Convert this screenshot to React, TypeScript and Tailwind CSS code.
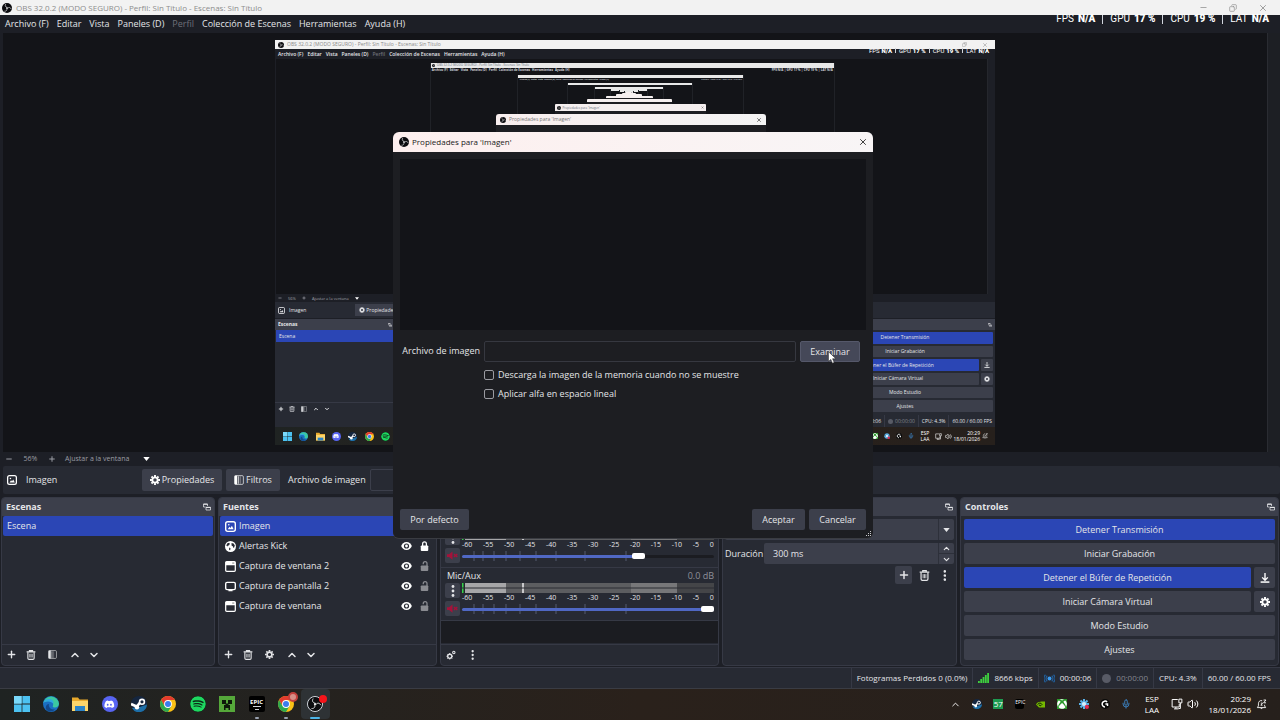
import React from 'react';
import clsx from 'clsx';
import { ChevronDown, ChevronUp, Copy, Mic, Minus, Plus, Volume2, X } from 'lucide-react';
import { FaDiscord, FaSpotify, FaXbox } from 'react-icons/fa';

interface IconProps {
  className?: string;
}

/* ---------- Icons ---------- */

const ObsLogo: React.FC<IconProps> = ({ className }) => (
  <svg viewBox="0 0 24 24" className={className} aria-hidden="true">
    <circle cx="12" cy="12" r="12" fill="#0c0c0f" />
    <g fill="none" stroke="#e8e8ea" strokeWidth="1.6" strokeLinecap="round">
      <path d="M12 10.5c-4-.5-5.500-4-3.500-7.200" />
      <path d="M13.500 12.700c2.500-3.200 6.300-2.800 8 .6" />
      <path d="M11.500 13.500c1.500 3.700-1 6.500-4.800 6.300" />
    </g>
    <circle cx="12" cy="12.200" r="2" fill="#e8e8ea" />
  </svg>
);

const ImageIcon: React.FC<IconProps> = ({ className }) => (
  <svg viewBox="0 0 16 16" className={className} aria-hidden="true">
    <rect x="1" y="1" width="14" height="14" rx="3" fill="none" stroke="currentColor" strokeWidth="2" />
    <path d="M4 12l2.500-3.500L8 10l2-3 2.500 5z" fill="currentColor" />
    <circle cx="5.500" cy="5.500" r="1.200" fill="currentColor" />
  </svg>
);

const GearIcon: React.FC<IconProps> = ({ className }) => (
  <svg viewBox="0 0 16 16" className={className} aria-hidden="true">
    <circle cx="8" cy="8" r="4.300" fill="none" stroke="currentColor" strokeWidth="3" />
    <path
      d="M8 0v3M8 13v3M0 8h3M13 8h3M2.400 2.400l2 2M11.600 11.600l2 2M2.400 13.600l2-2M11.600 4.400l2-2"
      stroke="currentColor"
      strokeWidth="3"
    />
  </svg>
);

const GearsIcon: React.FC<IconProps> = ({ className }) => (
  <svg viewBox="0 0 16 16" className={className} fill="none" stroke="currentColor" aria-hidden="true">
    <circle cx="6" cy="10" r="3.300" strokeWidth="2.200" />
    <path d="M6 4.800v2M6 13.200v2M.8 10h2M9.200 10h2M2.300 6.300l1.500 1.500M9.700 13.700l-1.500-1.500M2.300 13.700l1.500-1.500" strokeWidth="1.600" />
    <circle cx="12.500" cy="4" r="1.900" strokeWidth="1.700" />
  </svg>
);

const TrashIcon: React.FC<IconProps> = ({ className }) => (
  <svg viewBox="0 0 16 16" className={className} fill="none" stroke="currentColor" aria-hidden="true">
    <path d="M1 3h14M5.500 2.500V1h5v1.500" strokeWidth="1.800" />
    <path d="M3 3.500v9.500a2 2 0 0 0 2 2h6a2 2 0 0 0 2-2V3.500" strokeWidth="1.800" />
    <path d="M6 6v6M8 6v6M10 6v6" strokeWidth="1.200" />
  </svg>
);

const FilterIcon: React.FC<IconProps> = ({ className }) => (
  <svg viewBox="0 0 16 16" className={className} aria-hidden="true">
    <rect x="1" y="1" width="14" height="14" rx="2" fill="none" stroke="currentColor" strokeWidth="1.500" opacity=".7" />
    <path d="M1 1h4v14H1z" fill="currentColor" />
    <path d="M6 2h2v12H6z" fill="currentColor" opacity=".65" />
    <path d="M9 2h2v12H9z" fill="currentColor" opacity=".3" />
  </svg>
);

const PopOutIcon: React.FC<IconProps> = ({ className }) => (
  <svg viewBox="0 0 16 16" className={className} fill="none" stroke="currentColor" aria-hidden="true">
    <path d="M9 6V2H1v6h4" strokeWidth="1.500" />
    <path d="M1 2.500h8" strokeWidth="2.400" />
    <path d="M6 8.500h9V14H6z" strokeWidth="1.500" />
    <path d="M6 9h9" strokeWidth="2.400" />
  </svg>
);

const DotsIcon: React.FC<IconProps> = ({ className }) => (
  <svg viewBox="0 0 4 12" className={className} fill="currentColor" aria-hidden="true">
    <circle cx="2" cy="1.500" r="1.400" />
    <circle cx="2" cy="6" r="1.400" />
    <circle cx="2" cy="10.500" r="1.400" />
  </svg>
);

const CaretIcon: React.FC<IconProps> = ({ className }) => (
  <svg viewBox="0 0 8 5" className={className} fill="currentColor" aria-hidden="true">
    <path d="M0 0h8L4 5z" />
  </svg>
);

const WindowIcon: React.FC<IconProps> = ({ className }) => (
  <svg viewBox="0 0 16 16" className={className} aria-hidden="true">
    <rect x="1" y="1" width="14" height="14" rx="1.500" fill="none" stroke="currentColor" strokeWidth="1.800" />
    <path d="M1 1h14v5H1z" fill="currentColor" />
    <path d="M10.500 3h3" stroke="#444" strokeWidth="1" />
  </svg>
);

const DisplayIcon: React.FC<IconProps> = ({ className }) => (
  <svg viewBox="0 0 16 16" className={className} aria-hidden="true">
    <rect x="1" y="2" width="14" height="10.500" rx="2" fill="none" stroke="currentColor" strokeWidth="2" />
    <path d="M5 12h6v3H5z" fill="currentColor" />
  </svg>
);

const GlobeIcon: React.FC<IconProps> = ({ className }) => (
  <svg viewBox="0 0 16 16" className={className} aria-hidden="true">
    <circle cx="8" cy="8" r="8" fill="currentColor" />
    <path d="M3 3.500l3-1 1 1.500-1 2-2 1L3.500 8 2 7zM9.500 3l3 .5 1.800 3-1 3-1 .500-1-2.500-1.800-1zM6 9.500l2 1-.5 3L6 13z" fill="#272a33" />
  </svg>
);

const EyeIcon: React.FC<IconProps> = ({ className }) => (
  <svg viewBox="0 0 16 12" className={className} aria-hidden="true">
    <path d="M8 0C4 0 1.200 2.800 0 6c1.200 3.200 4 6 8 6s6.800-2.800 8-6c-1.200-3.200-4-6-8-6z" fill="currentColor" />
    <circle cx="8" cy="6" r="3.900" fill="#272a33" />
    <circle cx="8" cy="6" r="2.100" fill="currentColor" />
  </svg>
);

const LockIcon: React.FC<IconProps & { open?: boolean }> = ({ className, open }) => (
  <svg viewBox="0 0 14 16" className={className} aria-hidden="true">
    <rect x="1" y="7" width="12" height="9" rx="1.500" fill="currentColor" />
    <path
      d={open ? 'M5 5V4a3 3 0 0 1 6 0v4' : 'M4 8V4.500a3 3 0 0 1 6 0V8'}
      fill="none"
      stroke="currentColor"
      strokeWidth="2"
    />
  </svg>
);

const MutedIcon: React.FC<IconProps> = ({ className }) => (
  <svg viewBox="0 0 16 12" className={className} aria-hidden="true">
    <path d="M0 4h3l5-4v12L3 8H0z" fill="#a5123a" />
    <path d="M10 4l5 4M15 4l-5 4" stroke="#a5123a" strokeWidth="2" />
  </svg>
);

const SaveIcon: React.FC<IconProps> = ({ className }) => (
  <svg viewBox="0 0 16 16" className={className} fill="none" stroke="currentColor" aria-hidden="true">
    <path d="M8 0v11M3.500 7L8 11.500 12.500 7" strokeWidth="2.200" />
    <path d="M1 14.500h14" strokeWidth="2.400" />
  </svg>
);

const WindowsLogo: React.FC<IconProps> = ({ className }) => (
  <svg viewBox="0 0 16 16" className={className} aria-hidden="true">
    <path d="M0 0h7.600v7.600H0zM8.400 0H16v7.600H8.400zM0 8.400h7.600V16H0zM8.400 8.400H16V16H8.400z" fill="#4cc2f1" />
    <path d="M0 0h7.600v7.600H0z" fill="#7ad9fa" />
  </svg>
);

const EdgeLogo: React.FC<IconProps> = ({ className }) => (
  <svg viewBox="0 0 16 16" className={className} aria-hidden="true">
    <circle cx="8" cy="8" r="8" fill="#1b6fc2" />
    <path d="M.2 7A8 8 0 0 1 16 7.800c0 2.400-2 3.700-4 3.700-1.700 0-2.700-.8-2.200-1.600C11 8 9.500 5 6 5 3.200 5 .8 6 .2 7z" fill="#3cc8a0" />
    <path d="M.2 7C1.200 4 4 2.500 7 3c3 .6 4 3 3.500 5C9 5.500 4 4.500.2 7z" fill="#2fa8e0" />
    <path d="M6 8c-1 3 1.500 6 6 5.500-2 2.500-7 3-9-.5C2 10.500 4 8 6 8z" fill="#12488c" />
  </svg>
);

const FolderLogo: React.FC<IconProps> = ({ className }) => (
  <svg viewBox="0 0 16 16" className={className} aria-hidden="true">
    <path d="M0 1.500h6l1.500 2H16V15H0z" fill="#e8a92c" />
    <path d="M0 5h16v10H0z" fill="#fcd56a" />
    <path d="M3 10h10v5H3z" fill="#2b84c8" />
  </svg>
);

const DiscordLogo: React.FC<IconProps> = ({ className }) => (
  <span className={clsx('flex items-center justify-center rounded-full bg-[#5865f2] text-white', className)}>
    <FaDiscord className="w-2/3 h-2/3" />
  </span>
);

const SteamLogo: React.FC<IconProps> = ({ className }) => (
  <svg viewBox="0 0 16 16" className={className} aria-hidden="true">
    <circle cx="8" cy="8" r="8" fill="#15263f" />
    <path d="M1 12A8 8 0 0 0 16 8.500L9 11z" fill="#1d6fa8" />
    <path d="M0 8l5 2.200a2.300 2.300 0 0 1 1.500-.4L9 6.500" fill="none" stroke="#fff" strokeWidth="2.600" />
    <circle cx="6" cy="11.300" r="2.200" fill="#fff" />
    <circle cx="11" cy="5.800" r="2.400" fill="#15263f" stroke="#fff" strokeWidth="1.600" />
  </svg>
);

const ChromeLogo: React.FC<IconProps> = ({ className }) => (
  <svg viewBox="0 0 16 16" className={className} aria-hidden="true">
    <circle cx="8" cy="8" r="8" fill="#fbc116" />
    <path d="M8 4h6.900A8 8 0 0 0 1.100 4L4.500 9.800z" fill="#e33b2e" />
    <path d="M1.100 4A8 8 0 0 0 8 16l3.500-6L8 8 4.500 10z" fill="#2da94f" />
    <circle cx="8" cy="8" r="3.900" fill="#fff" />
    <circle cx="8" cy="8" r="3" fill="#3b7ded" />
  </svg>
);

const SpotifyLogo: React.FC<IconProps> = ({ className }) => (
  <FaSpotify className={clsx('rounded-full bg-[#0c2b16] text-[#1ed760]', className)} />
);

const CreeperLogo: React.FC<IconProps> = ({ className }) => (
  <svg viewBox="0 0 16 16" className={className} aria-hidden="true">
    <path d="M0 0h16v16H0z" fill="#55a83a" />
    <path d="M3 4h4v4H3zM9 4h4v4H9zM6.500 7.500h3V9H11v5H9.500v-2h-3v2H5V9h1.500z" fill="#0d1a0a" />
  </svg>
);

const EpicLogo: React.FC<IconProps> = ({ className }) => (
  <span className={clsx('flex flex-col items-center justify-center rounded-xs bg-black text-white font-bold', className)}>
    <span className="text-[6px] leading-[7px]">EPIC</span>
    <span className="w-2 h-px bg-gray-300" />
    <span className="w-1 h-px mt-[2px] bg-gray-300" />
  </span>
);

const ChromeBadgeLogo: React.FC<IconProps> = ({ className }) => (
  <span className={clsx('relative', className)}>
    <ChromeLogo className="w-full h-full" />
    <span className="absolute -top-1 -right-1 w-[10px] h-[10px] rounded-full border-2 border-[#c4403c] bg-[#d89088]" />
  </span>
);

const ObsRunningLogo: React.FC<IconProps> = ({ className }) => (
  <span className={clsx('relative', className)}>
    <ObsLogo className="w-full h-full rounded-full border border-gray-300" />
    <span className="absolute -top-px -right-1 w-2 h-2 rounded-full bg-[#f5151b]" />
  </span>
);

/* ---------- Data ---------- */

const MENU = ['Archivo (F)', 'Editar', 'Vista', 'Paneles (D)', 'Perfil', 'Colección de Escenas', 'Herramientas', 'Ayuda (H)'];

const STATS = [
  ['FPS', 'N/A'],
  ['GPU', '17 %'],
  ['CPU', '19 %'],
  ['LAT', 'N/A'],
];

const SOURCES = [
  { name: 'Imagen', icon: ImageIcon, selected: true, locked: false },
  { name: 'Alertas Kick', icon: GlobeIcon, selected: false, locked: true },
  { name: 'Captura de ventana 2', icon: WindowIcon, selected: false, locked: false },
  { name: 'Captura de pantalla 2', icon: DisplayIcon, selected: false, locked: false },
  { name: 'Captura de ventana', icon: WindowIcon, selected: false, locked: false },
];

const DB_LABELS = ['-60', '-55', '-50', '-45', '-40', '-35', '-30', '-25', '-20', '-15', '-10', '-5', '0'];
const FADER_TICKS = [12, 21, 32, 44, 58, 74, 94, 123, 164];

const APPS = [
  { name: 'Inicio', icon: WindowsLogo },
  { name: 'Edge', icon: EdgeLogo },
  { name: 'Explorador', icon: FolderLogo },
  { name: 'Discord', icon: DiscordLogo },
  { name: 'Steam', icon: SteamLogo },
  { name: 'Chrome', icon: ChromeLogo },
  { name: 'Spotify', icon: SpotifyLogo },
  { name: 'Minecraft', icon: CreeperLogo },
  { name: 'Epic Games', icon: EpicLogo, open: true },
  { name: 'Chrome 2', icon: ChromeBadgeLogo, open: true },
  { name: 'OBS', icon: ObsRunningLogo, active: true },
];

/* ---------- Shared pieces ---------- */

const Stats: React.FC<{ mini?: boolean }> = ({ mini }) => (
  <div
    className={clsx(
      'absolute flex items-center font-[Roboto] text-white',
      mini ? 'right-[6px] top-[7px] text-[6px] leading-[7px]' : 'right-[11px] top-[13px] text-[10px] leading-[12px]'
    )}
  >
    {STATS.map(([label, value], i) => (
      <React.Fragment key={label}>
        {i > 0 && <span className={clsx('w-px bg-gray-300', mini ? 'h-[5px] mx-[3px]' : 'h-[9px] mx-[7px]')} />}
        <span className={mini ? 'mr-[2px]' : 'mr-[4px]'}>{label}</span>
        <span className="font-black">{value}</span>
      </React.Fragment>
    ))}
  </div>
);

const StatusBar: React.FC<{ mini?: boolean }> = ({ mini }) => {
  const cell = clsx('flex items-center h-full border-l border-[#363945]', mini ? 'px-[3px] gap-[2px]' : 'px-[5px] gap-[5px]');
  return (
    <div
      className={clsx(
        'flex items-center justify-end shrink-0 overflow-hidden whitespace-nowrap bg-[#272a33] text-[#e4e5e8]',
        mini ? 'h-[12px] text-[5px]' : 'h-[21px] border-t border-[#363945] text-[8px]'
      )}
    >
      {!mini && (
        <>
          <span className={cell}>Fotogramas Perdidos 0 (0.0%)</span>
          <span className={cell}>
            <svg viewBox="0 0 11 10" className="w-[11px] h-[10px]" fill="#3fd13f" aria-hidden="true">
              <path d="M0 8h1.800v2H0zM2.300 6h1.800v4H2.300zM4.600 4h1.800v6H4.600zM6.900 2h1.800v8H6.900zM9.200 0H11v10H9.200z" />
            </svg>
            8666 kbps
          </span>
        </>
      )}
      <span className={cell}>
        <svg viewBox="0 0 12 10" className={mini ? 'w-[5px] h-[5px]' : 'w-[11px] h-[9px]'} fill="none" stroke="#22619f" strokeWidth="1.300" aria-hidden="true">
          <circle cx="6" cy="5" r="2.200" fill="#3b9bef" stroke="none" />
          <path d="M3.500 2a4 4 0 0 0 0 6M8.500 2a4 4 0 0 1 0 6M1.500 .8a6 6 0 0 0 0 8.400M10.500 .8a6 6 0 0 1 0 8.400" />
        </svg>
        00:00:06
      </span>
      <span className={clsx(cell, 'text-[#858791]')}>
        <span className={clsx('rounded-full bg-[#585b66]', mini ? 'w-[5px] h-[5px]' : 'w-[9px] h-[9px]')} />
        00:00:00
      </span>
      <span className={cell}>CPU: 4.3%</span>
      <span className={cell}>60.00 / 60.00 FPS</span>
      {!mini && <span className="w-1" />}
    </div>
  );
};

const TrayIcons: React.FC<{ mini?: boolean }> = ({ mini }) => {
  const size = mini ? 'w-[6px] h-[6px]' : 'w-[10px] h-[10px]';
  return (
    <>
      <FaXbox className={clsx('bg-[#2c9a2c] text-white', size)} />
      <svg viewBox="0 0 12 12" className={size} aria-hidden="true">
        <path d="M6 0v12M0 6h12M1.800 1.800l8.400 8.400M10.200 1.800l-8.400 8.400" stroke="#5ab2e8" strokeWidth="2.500" />
        <circle cx="6" cy="6" r="2.500" fill="#d8eefa" />
        <circle cx="9.500" cy="9.500" r="2.500" fill="#e02b50" />
      </svg>
      <svg viewBox="0 0 12 12" className={size} aria-hidden="true">
        <circle cx="6" cy="6" r="6" fill="#0a0a0a" />
        <path d="M8.500 3.500A3.500 3.500 0 1 0 6 9.500M6.500 6H9v2.500" fill="none" stroke="#fff" strokeWidth="1.800" />
      </svg>
      <Mic className={clsx('text-[#3f8fd8]', size)} />
    </>
  );
};

const MonitorIcon: React.FC<IconProps> = ({ className }) => (
  <svg viewBox="0 0 16 16" className={className} fill="none" stroke="#fff" strokeWidth="1.300" aria-hidden="true">
    <path d="M9 2H1.500v10H11V8M4 14.500h6M6.500 12v2.500" />
    <path d="M10.500 1.500h4v5h-4zM12.500 6.500V14H10" />
  </svg>
);

const BellIcon: React.FC<IconProps> = ({ className }) => (
  <svg viewBox="0 0 16 16" className={className} fill="none" stroke="#fff" strokeWidth="1.300" aria-hidden="true">
    <path d="M9 2.500C5.500 1.500 3.500 4 3.500 7v3L2 12.500h12L12.500 10V8.500M6.500 13a1.700 1.700 0 0 0 3 0" />
    <path d="M11 1.500h3.500L11 5.500h3.500M7 6h2.500L7 9h2.500" />
  </svg>
);

const Taskbar: React.FC<{ mini?: boolean }> = ({ mini }) => (
  <div
    className={clsx(
      'flex items-center justify-between shrink-0 bg-linear-to-r from-[#1f2322] via-[#2a211b] to-[#26201c] text-white',
      mini ? 'h-[18px]' : 'h-[32px] pb-px border-t border-[#3a3c44]'
    )}
  >
    <div className={clsx('grid h-full', mini ? 'grid-cols-7 w-[115px] ml-[4px]' : 'grid-cols-11 w-[323px] ml-[7px]')}>
      {APPS.slice(0, mini ? 7 : 11).map(({ name, icon: Icon, open, active }) =>
        mini ? (
          <span key={name} className="flex items-center justify-center">
            <Icon className="w-[9px] h-[9px]" />
          </span>
        ) : (
          <button
            key={name}
            aria-label={name}
            className={clsx('relative flex items-center justify-center rounded-sm', active && 'bg-[#2e3235]')}
          >
            <Icon className="w-4 h-4" />
            {open && <span className="absolute bottom-0 w-1 h-[2px] rounded-full bg-gray-400" />}
            {active && <span className="absolute bottom-0 w-[10px] h-[2px] rounded-full bg-[#4cb4e8]" />}
          </button>
        )
      )}
    </div>

    <div className={clsx('flex items-center h-full', mini ? 'pr-[5px] text-[5px] leading-[6px]' : 'pr-[9px] text-[8px] leading-[11px]')}>
      <div className={clsx('grid items-center justify-items-center', mini ? 'grid-cols-4 w-[48px]' : 'grid-cols-9 w-[192px]')}>
        {!mini && (
          <>
            <ChevronUp className="w-[11px] h-[11px]" />
            <SteamLogo className="w-[10px] h-[10px]" />
            <span className="w-[10px] h-[10px] bg-[#1d9a50] text-[8px] leading-[10px] text-center">57</span>
            <span className="w-[9px] h-[10px] rounded-xs bg-black text-[5px] leading-[6px] text-center">EPIC</span>
            <svg viewBox="0 0 12 12" className="w-[9px] h-[9px]" aria-hidden="true">
              <path d="M0 6c2-4 5-4 12-4v8H4z" fill="#76b900" />
              <path d="M2 6c1.500-2.500 5-2.500 6 0-1.500 2.500-4 2-4 0" fill="none" stroke="#10200a" strokeWidth="1.300" />
            </svg>
          </>
        )}
        <TrayIcons mini={mini} />
      </div>
      <div className={clsx('text-center', mini ? 'w-[16px]' : 'w-[30px]')}>
        ESP
        <br />
        LAA
      </div>
      <span className={clsx('flex justify-center', mini ? 'w-[11px]' : 'w-5')}>
        <MonitorIcon className={mini ? 'w-[7px] h-[7px]' : 'w-[12px] h-[12px]'} />
      </span>
      <span className={clsx('flex justify-center', mini ? 'w-[8px]' : 'w-3')}>
        <Volume2 className={mini ? 'w-[7px] h-[7px]' : 'w-[12px] h-[12px]'} />
      </span>
      <div className={clsx('text-right whitespace-nowrap', mini ? 'w-[28px]' : 'w-[52px]')}>
        20:29
        <br />
        18/01/2026
      </div>
      <span className={clsx('flex justify-center', mini ? 'w-[10px]' : 'w-5')}>
        <BellIcon className={mini ? 'w-[6px] h-[6px]' : 'w-[11px] h-[11px]'} />
      </span>
    </div>
  </div>
);

/* ---------- Captured screen ---------- */

// Every level repeats the desktop at 56.25% of the one around it
const Echo: React.FC<{ depth: number }> = ({ depth }) => (
  <div className="absolute left-[21.5%] top-[5.6%] w-[56.25%] aspect-video bg-[#131418] border-x border-[#202227]">
    <div className="flex items-center h-[2.2%] min-h-[2px] bg-[#e8e8e8]">
      {depth === 1 && <ObsLogo className="w-[3px] h-[3px] ml-px" />}
      {depth === 1 && <span className="ml-[2px] text-[3px] leading-[4px] text-gray-500 whitespace-nowrap">OBS 32.0.2 (MODO SEGURO) - Perfil: Sin Título - Escenas: Sin Título</span>}
    </div>
    {depth < 3 && (
      <div
        className={clsx(
          'flex justify-between px-px font-bold text-gray-300 whitespace-nowrap',
          depth === 1 ? 'text-[3px] leading-[5px]' : 'text-[2px] leading-[3px]'
        )}
      >
        <div className={clsx('flex', depth === 1 ? 'gap-[2px]' : 'gap-px')}>
          {MENU.map((item) => (
            <span key={item}>{item}</span>
          ))}
        </div>
        <span>FPS N/A | GPU 17 % | CPU 19 % | LAT N/A</span>
      </div>
    )}
    {depth < 7 && <Echo depth={depth + 1} />}
    <div className="absolute left-[30.7%] top-[18.3%] w-[37.5%] h-[56%] bg-[#1d1e22]">
      <div className="flex items-center justify-between h-[5%] min-h-[2px] rounded-t-[1px] bg-[#f5efef]">
        {depth === 1 && (
          <>
            <span className="flex items-center gap-[2px] text-[3px] leading-[4px] text-gray-500">
              <ObsLogo className="w-[4px] h-[4px] ml-[2px]" />
              Propiedades para 'Imagen'
            </span>
            <X className="w-[3px] h-[3px] mr-[2px] text-black" />
          </>
        )}
      </div>
    </div>
  </div>
);

const MiniControl: React.FC<{ label: string; primary?: boolean; side?: React.ReactNode }> = ({ label, primary, side }) => (
  <div className="flex gap-[2px]">
    <span className={clsx('flex flex-1 items-center justify-center rounded-[1px]', primary ? 'bg-[#2b46b5]' : 'bg-[#3c3f4b]')}>{label}</span>
    {side && <span className="flex items-center justify-center w-[12px] rounded-[1px] bg-[#3c3f4b]">{side}</span>}
  </div>
);

const CapturedScreen: React.FC = () => (
  <div className="relative flex flex-col h-full aspect-video bg-[#1d1f26] text-[5px] leading-[7px] text-[#e4e5e8] whitespace-nowrap">
    <div className="flex items-center h-[9px] px-[3px] gap-[3px] bg-[#f2f2f2] text-[#8a8a8a]">
      <ObsLogo className="w-[6px] h-[6px]" />
      <span className="flex-1">OBS 32.0.2 (MODO SEGURO) - Perfil: Sin Título - Escenas: Sin Título</span>
      <Copy className="w-[5px] h-[5px] -scale-x-100 mr-[12px]" />
      <X className="w-[6px] h-[6px] mr-[4px]" />
    </div>
    <div className="flex items-center h-[10px] px-[3px] gap-[4px] font-semibold">
      {MENU.map((item) => (
        <span key={item} className={clsx(item === 'Perfil' && 'text-[#6d6f78]')}>
          {item}
        </span>
      ))}
    </div>
    <Stats mini />
    <div className="flex-1 ml-px mr-[7px] border-r border-[#25272d] bg-[#131418]" />
    <div className="flex items-center h-[8px] px-[3px] gap-[6px] text-[4px] text-[#a0a2a9]">
      <Minus className="w-[4px] h-[4px]" strokeWidth={4} />
      <span>56%</span>
      <Plus className="w-[4px] h-[4px]" strokeWidth={4} />
      <span>Ajustar a la ventana</span>
      <CaretIcon className="w-[4px] h-[3px] text-white" />
    </div>
    <div className="flex items-center h-[16px] px-[3px] bg-[#272a33]">
      <ImageIcon className="w-[7px] h-[7px]" />
      <span className="w-[66px] ml-[4px]">Imagen</span>
      <span className="flex items-center justify-center gap-px w-[45px] h-[12px] bg-[#3c3f4b]">
        <GearIcon className="w-[6px] h-[6px]" />
        Propiedades
      </span>
    </div>
    <div className="flex justify-between h-[97px] pt-px">
      <div className="flex flex-col w-[120px] bg-[#272a33]">
        <div className="flex items-center justify-between h-[11px] px-[3px] bg-[#3c3f4b] font-bold">
          Escenas
          <PopOutIcon className="w-[4px] h-[4px]" />
        </div>
        <div className="flex-1 px-px">
          <div className="h-[12px] px-[3px] leading-[12px] bg-[#2b46b5]">Escena</div>
        </div>
        <div className="flex items-center h-[13px] px-[3px] gap-[5px] border-t border-[#363945]">
          <Plus className="w-[6px] h-[6px]" strokeWidth={4} />
          <TrashIcon className="w-[6px] h-[6px]" />
          <FilterIcon className="w-[6px] h-[6px] mx-px" />
          <ChevronUp className="w-[6px] h-[6px]" strokeWidth={4} />
          <ChevronDown className="w-[6px] h-[6px]" strokeWidth={4} />
        </div>
      </div>
      <div className="flex flex-col w-[180px] bg-[#272a33]">
        <div className="flex items-center justify-end h-[11px] px-[3px] bg-[#3c3f4b]">
          <PopOutIcon className="w-[4px] h-[4px]" />
        </div>
        <div className="grid flex-1 grid-rows-6 gap-[2px] px-[2px] pt-[2px] pb-[3px]">
          <MiniControl label="Detener Transmisión" primary />
          <MiniControl label="Iniciar Grabación" />
          <MiniControl label="Detener el Búfer de Repetición" primary side={<SaveIcon className="w-[6px] h-[6px]" />} />
          <MiniControl label="Iniciar Cámara Virtual" side={<GearIcon className="w-[6px] h-[6px]" />} />
          <MiniControl label="Modo Estudio" />
          <MiniControl label="Ajustes" />
        </div>
      </div>
    </div>
    <StatusBar mini />
    <Taskbar mini />
    <Echo depth={1} />
    <div className="absolute left-[30.7%] top-[18.3%] w-[37.5%] h-[56%] bg-[#1d1e22]">
      <div className="flex items-center h-[11px] px-[4px] gap-[3px] rounded-t-[3px] bg-linear-to-r from-[#f8eeee] to-[#f4f4f4] text-[#777]">
        <ObsLogo className="w-[6px] h-[6px]" />
        <span className="flex-1">Propiedades para 'Imagen'</span>
        <X className="w-[6px] h-[6px] text-black" />
      </div>
    </div>
  </div>
);

/* ---------- Docks ---------- */

const Dock: React.FC<{ title?: string; popOut?: boolean; footer?: React.ReactNode; children: React.ReactNode }> = ({
  title,
  popOut = true,
  footer,
  children,
}) => (
  <section className="flex flex-col min-w-0 rounded-sm border border-[#363945] bg-[#272a33] overflow-hidden">
    <header className="flex items-center justify-between h-[18px] pb-px pl-1 pr-[3px] shrink-0 bg-[#3c3f4b]">
      <h2 className="font-bold">{title}</h2>
      {popOut && (
        <button aria-label="Desacoplar">
          <PopOutIcon className="w-[8px] h-[8px]" />
        </button>
      )}
    </header>
    <div className="flex-1 min-h-0">{children}</div>
    {footer && <footer className="flex items-center h-[21px] pb-px shrink-0 border-t border-[#363945]">{footer}</footer>}
  </section>
);

const ToolButton: React.FC<{ label: string; children: React.ReactNode }> = ({ label, children }) => (
  <button aria-label={label} className="flex items-center justify-center w-[19px] h-[18px]">
    {children}
  </button>
);

const Meter: React.FC = () => (
  <svg viewBox="0 0 252 10" preserveAspectRatio="none" className="w-full h-[10px]" aria-hidden="true">
    <path d="M0 0h252v10H0z" fill="#444548" />
    <path d="M0 0h215v10H0z" fill="#5c5d60" />
    <path d="M169 0h46v10h-46z" fill="#777779" />
    <path d="M0 0h44v10H0z" fill="#a6a6a8" />
    <path d="M0 0h3v10H0z" fill="#20272b" />
    <path d="M0 0h1.500v10H0z" fill="#35d04a" />
    <path d="M60 0h2v10h-2z" fill="#c9c9cb" />
    <path d="M0 4.500h252v1H0z" fill="#2b2d33" />
  </svg>
);

const Track: React.FC<{ name?: string; level?: string; value: number; label: string }> = ({ name, level, value, label }) => (
  <div className="h-[53px] px-[4px] border-b border-[#363945]">
    <div className="flex items-center justify-between h-[15px] pl-[2px]">
      <span>{name}</span>
      <span className="text-[#8f919a]">{level}</span>
    </div>
    <div className="grid grid-cols-[15px_1fr] gap-x-[2px]">
      <div className="flex flex-col gap-[3px]">
        <button aria-label={'Opciones ' + label} className="flex items-center justify-center h-[15px] rounded-xs bg-[#3c3f4b]">
          <DotsIcon className="h-[12px]" />
        </button>
        <button aria-label={'Silenciar ' + label} className="flex items-center justify-center h-[15px] rounded-xs bg-[#3c3f4b]">
          <MutedIcon className="w-[11px] h-[9px]" />
        </button>
      </div>
      <div className="flex flex-col min-w-0">
        <Meter />
        <div className="flex justify-between h-[9px] text-[7px] leading-[9px]">
          {DB_LABELS.map((db) => (
            <span key={db}>{db}</span>
          ))}
        </div>
        <div className="relative flex items-center h-[14px]">
          <svg viewBox="0 0 252 10" preserveAspectRatio="none" className="absolute inset-x-0 w-full h-[10px]" aria-hidden="true">
            {FADER_TICKS.map((x) => (
              <path key={x} d={`M${x} 0v10`} stroke="#555a70" strokeWidth="1" />
            ))}
          </svg>
          <input
            type="range"
            aria-label={'Volumen ' + label}
            min={0}
            max={100}
            defaultValue={value}
            className="relative w-full h-[3px] appearance-none rounded-full [&::-webkit-slider-thumb]:appearance-none [&::-webkit-slider-thumb]:w-[13px] [&::-webkit-slider-thumb]:h-[6px] [&::-webkit-slider-thumb]:rounded-[2px] [&::-webkit-slider-thumb]:bg-white"
            style={{ background: `linear-gradient(to right, #5068c4 ${value}%, #1b1c21 ${value}%)` }}
          />
        </div>
      </div>
    </div>
  </div>
);

const ControlButton: React.FC<{ label: string; primary?: boolean }> = ({ label, primary }) => (
  <button className={clsx('flex-1 h-[21px] rounded-xs', primary ? 'bg-[#2b46b5]' : 'bg-[#3c3f4b]')}>{label}</button>
);

const SideButton: React.FC<{ label: string; children: React.ReactNode }> = ({ label, children }) => (
  <button aria-label={label} className="flex items-center justify-center w-[21px] h-[21px] rounded-xs bg-[#3c3f4b] text-white">
    {children}
  </button>
);

const Docks: React.FC = () => (
  <div className="grid grid-cols-[214fr_219fr_279fr_235fr_319fr] gap-[3px] h-[169px] px-px shrink-0">
    <Dock
      title="Escenas"
      footer={
        <>
          <ToolButton label="Añadir escena"><Plus className="w-[11px] h-[11px]" strokeWidth={3} /></ToolButton>
          <ToolButton label="Eliminar escena"><TrashIcon className="w-[10px] h-[10px]" /></ToolButton>
          <span className="w-[3px]" />
          <ToolButton label="Filtros de escena"><FilterIcon className="w-[9px] h-[9px]" /></ToolButton>
          <span className="w-[3px]" />
          <ToolButton label="Subir escena"><ChevronUp className="w-[12px] h-[12px]" strokeWidth={3} /></ToolButton>
          <ToolButton label="Bajar escena"><ChevronDown className="w-[12px] h-[12px]" strokeWidth={3} /></ToolButton>
        </>
      }
    >
      <div className="h-5 mx-px px-[4px] leading-5 rounded-xs bg-[#2b46b5]">Escena</div>
    </Dock>

    <Dock
      title="Fuentes"
      footer={
        <>
          <ToolButton label="Añadir fuente"><Plus className="w-[11px] h-[11px]" strokeWidth={3} /></ToolButton>
          <ToolButton label="Eliminar fuente"><TrashIcon className="w-[10px] h-[10px]" /></ToolButton>
          <span className="w-[3px]" />
          <ToolButton label="Propiedades de fuente"><GearIcon className="w-[9px] h-[9px]" /></ToolButton>
          <span className="w-[3px]" />
          <ToolButton label="Subir fuente"><ChevronUp className="w-[12px] h-[12px]" strokeWidth={3} /></ToolButton>
          <ToolButton label="Bajar fuente"><ChevronDown className="w-[12px] h-[12px]" strokeWidth={3} /></ToolButton>
        </>
      }
    >
      <ul>
        {SOURCES.map(({ name, icon: Icon, selected, locked }) => (
          <li key={name} className={clsx('flex items-center h-5 mx-px pl-[5px] pr-[6px] rounded-xs', selected && 'bg-[#2b46b5]')}>
            <Icon className="w-[11px] h-[11px] text-white" />
            <span className="flex-1 ml-[3px]">{name}</span>
            <EyeIcon className="w-[11px] h-[8px] text-white" />
            <LockIcon open={!locked} className={clsx('w-[9px] h-[10px] ml-[8px]', locked ? 'text-white' : 'text-[#8a8b91]')} />
          </li>
        ))}
      </ul>
    </Dock>

    <Dock
      popOut={false}
      footer={
        <>
          <ToolButton label="Propiedades de audio avanzadas"><GearsIcon className="w-[10px] h-[10px]" /></ToolButton>
          <span className="w-[3px]" />
          <ToolButton label="Menú del mezclador"><DotsIcon className="h-[10px]" /></ToolButton>
        </>
      }
    >
      <div className="h-full bg-[#1b1c21]">
        <div className="-mt-px bg-[#272a33]">
          <Track value={71} label="escritorio" />
          <Track name="Mic/Aux" level="0.0 dB" value={100} label="Mic/Aux" />
        </div>
      </div>
    </Dock>

    <Dock>
      <div className="flex flex-col gap-[3px] px-[2px] pt-[3px]">
        <div className="flex items-center justify-end h-[21px] rounded-xs bg-[#3c3f4b]">
          <button aria-label="Elegir transición" className="flex items-center justify-center w-[16px] h-full border-l border-[#2d303a]">
            <CaretIcon className="w-[7px] h-[4px]" />
          </button>
        </div>
        <div className="flex items-center">
          <label htmlFor="duration" className="w-[39px]">Duración</label>
          <div className="flex flex-1 h-[21px] rounded-xs bg-[#3c3f4b]">
            <input id="duration" defaultValue="300 ms" className="flex-1 min-w-0 px-[9px] bg-transparent" />
            <div className="flex flex-col w-[16px] border-l border-[#2d303a]">
              <button aria-label="Aumentar" className="flex flex-1 items-center justify-center border-b border-[#2d303a]"><ChevronUp className="w-[9px] h-[9px]" strokeWidth={3} /></button>
              <button aria-label="Disminuir" className="flex flex-1 items-center justify-center"><ChevronDown className="w-[9px] h-[9px]" strokeWidth={3} /></button>
            </div>
          </div>
        </div>
        <div className="flex items-center justify-end gap-px h-[16px]">
          <button aria-label="Añadir transición" className="flex items-center justify-center w-[17px] h-[18px] rounded-xs bg-[#3c3f4b]">
            <Plus className="w-[12px] h-[12px]" strokeWidth={3} />
          </button>
          <span className="w-px" />
          <ToolButton label="Eliminar transición"><TrashIcon className="w-[11px] h-[11px]" /></ToolButton>
          <ToolButton label="Opciones de transición"><DotsIcon className="h-[11px]" /></ToolButton>
        </div>
      </div>
    </Dock>

    <Dock title="Controles">
      <div className="flex flex-col gap-[3px] px-[3px] pt-[3px]">
        <div className="flex"><ControlButton label="Detener Transmisión" primary /></div>
        <div className="flex"><ControlButton label="Iniciar Grabación" /></div>
        <div className="flex gap-[3px]">
          <ControlButton label="Detener el Búfer de Repetición" primary />
          <SideButton label="Guardar repetición"><SaveIcon className="w-[10px] h-[10px]" /></SideButton>
        </div>
        <div className="flex gap-[3px]">
          <ControlButton label="Iniciar Cámara Virtual" />
          <SideButton label="Configurar cámara virtual"><GearIcon className="w-[10px] h-[10px]" /></SideButton>
        </div>
        <div className="flex"><ControlButton label="Modo Estudio" /></div>
        <div className="flex"><ControlButton label="Ajustes" /></div>
      </div>
    </Dock>
  </div>
);

/* ---------- Dialog ---------- */

const PropertiesDialog: React.FC = () => (
  <div role="dialog" aria-label="Propiedades para 'Imagen'" className="absolute left-[393px] top-[132px] flex flex-col w-[480px] h-[406px] rounded-md bg-[#1d1e22] shadow-[0_1px_0_0_#3a3c42] overflow-hidden">
    <div className="flex items-center h-5 pl-[6px] pr-[5px] shrink-0 bg-linear-to-r from-[#fdefee] to-[#f8f5f6] text-[8px] text-[#1a1a1a]">
      <ObsLogo className="w-[10px] h-[10px]" />
      <span className="flex-1 ml-[3px]">Propiedades para 'Imagen'</span>
      <button aria-label="Cerrar"><X className="w-[10px] h-[10px]" strokeWidth={2} /></button>
    </div>
    <div className="h-[171px] mx-[7px] mt-[7px] shrink-0 bg-[#131418]" />
    <div className="grid grid-cols-[80px_1fr_60px] gap-x-[4px] mt-[11px] pl-[7px] pr-[13px]">
      <label htmlFor="image-path" className="leading-[20px] text-right">Archivo de imagen</label>
      <input id="image-path" className="h-[21px] min-w-0 rounded-xs border border-[#363840] bg-[#1d1e22] px-1" />
      <button className="h-[21px] rounded-xs border border-[#55586a] bg-[#454858]">Examinar</button>
      <div className="flex flex-col gap-[5px] col-start-2 mt-[6px]">
        <label className="flex items-center gap-[4px] h-[14px]">
          <input type="checkbox" className="w-[10px] h-[10px] appearance-none rounded-xs border border-[#9a9ba1]" />
          Descarga la imagen de la memoria cuando no se muestre
        </label>
        <label className="flex items-center gap-[4px] h-[14px]">
          <input type="checkbox" className="w-[10px] h-[10px] appearance-none rounded-xs border border-[#9a9ba1]" />
          Aplicar alfa en espacio lineal
        </label>
      </div>
    </div>
    <div className="flex gap-[4px] mt-auto mb-[8px] px-[7px]">
      <button className="w-[69px] h-[21px] mr-auto rounded-xs bg-[#3c3f4b]">Por defecto</button>
      <button className="w-[53px] h-[21px] rounded-xs bg-[#3c3f4b]">Aceptar</button>
      <button className="w-[57px] h-[21px] rounded-xs bg-[#3c3f4b]">Cancelar</button>
    </div>
    <svg viewBox="0 0 6 6" className="absolute bottom-px right-px w-[6px] h-[6px]" fill="#c8c9cc" aria-hidden="true">
      <path d="M4 0h1v1H4zM2 2h1v1H2zM4 2h1v1H4zM0 4h1v1H0zM2 4h1v1H2zM4 4h1v1H4z" />
    </svg>
  </div>
);

const App: React.FC = () => {
  return (
    <div className="relative flex flex-col h-screen overflow-hidden bg-[#1d1f26] font-['Open_Sans',sans-serif] text-[9px] leading-[12px] text-[#e4e5e8] whitespace-nowrap">
      <div className="flex items-center h-[15px] pl-[2px] pr-[12px] shrink-0 bg-[#f2f2f2] text-[8px] text-[#8d8d8d]">
        <ObsLogo className="w-[10px] h-[10px]" />
        <span className="flex-1 ml-[4px]">OBS 32.0.2 (MODO SEGURO) - Perfil: Sin Título - Escenas: Sin Título</span>
        <div className="flex items-center gap-[21px]">
          <button aria-label="Minimizar"><Minus className="w-[9px] h-[9px]" /></button>
          <button aria-label="Restaurar"><Copy className="w-[8px] h-[8px] -scale-x-100" /></button>
          <button aria-label="Cerrar ventana"><X className="w-[10px] h-[10px]" /></button>
        </div>
      </div>

      <nav className="flex items-center h-[18px] px-[5px] gap-[8px] shrink-0">
        {MENU.map((item) => (
          <button key={item} disabled={item === 'Perfil'} className="disabled:text-[#6d6f78]">
            {item}
          </button>
        ))}
      </nav>
      <Stats />

      <main className="flex flex-1 min-h-0 pl-[3px]">
        <div className="flex flex-1 items-center justify-center min-w-0 py-[7px] bg-[#131418]">
          <CapturedScreen />
        </div>
        <div className="w-[13px] border-l border-[#2a2c32] bg-[#1d1f24]" />
      </main>

      <div className="flex items-center h-[14px] pb-px pl-[5px] shrink-0 text-[7px] text-[#9b9da4]">
        <button aria-label="Alejar"><Minus className="w-[8px] h-[8px]" strokeWidth={3} /></button>
        <span className="w-[35px] text-center">56%</span>
        <button aria-label="Acercar"><Plus className="w-[8px] h-[8px]" strokeWidth={3} /></button>
        <button className="flex items-center gap-[14px] ml-[9px]">
          Ajustar a la ventana
          <CaretIcon className="w-[7px] h-[4px] text-white" />
        </button>
      </div>

      <div className="flex items-center h-[28px] ml-[3px] mb-[3px] pl-[4px] shrink-0 rounded-xs bg-[#272a33]">
        <ImageIcon className="w-[10px] h-[10px] text-white" />
        <span className="w-[116px] ml-[9px]">Imagen</span>
        <button className="flex items-center justify-center gap-[2px] w-[80px] h-[22px] rounded-xs bg-[#3c3f4b]">
          <GearIcon className="w-[10px] h-[10px] text-white" />
          Propiedades
        </button>
        <button className="flex items-center justify-center gap-[2px] w-[54px] h-[22px] ml-[4px] rounded-xs bg-[#3c3f4b]">
          <FilterIcon className="w-[10px] h-[10px] text-white" />
          Filtros
        </button>
        <label htmlFor="source-path" className="w-[78px] ml-[8px]">Archivo de imagen</label>
        <input id="source-path" className="w-[400px] h-[22px] ml-[4px] rounded-xs border border-[#3c3f4b] bg-[#272a33]" />
      </div>

      <Docks />
      <div className="h-px shrink-0" />
      <StatusBar />
      <Taskbar />

      <PropertiesDialog />
      <svg viewBox="0 0 10 14" className="absolute left-[828px] top-[351px] w-[9px] h-[13px]" aria-hidden="true">
        <path d="M.5 .5v11l2.600-2.400 1.800 4.200 2-.8-1.800-4.100h3.700z" fill="#fff" stroke="#222" strokeWidth=".6" />
      </svg>
    </div>
  );
};

export default App;
